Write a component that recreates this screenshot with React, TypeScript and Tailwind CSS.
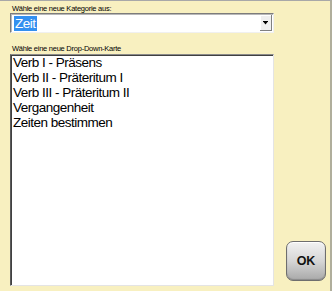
import React from "react";

const items = [
  "Verb I - Präsens",
  "Verb II - Präteritum I",
  "Verb III - Präteritum II",
  "Vergangenheit",
  "Zeiten bestimmen",
];

export default function App() {
  return (
    <div
      className="w-[332px] h-[291px] bg-[#f8f0c0] border-t border-t-[#a8a8a8] border-r-2 border-r-[#b0ae9c] flex flex-col pl-[10px] pt-[3px] overflow-hidden"
      style={{ fontFamily: '"Liberation Sans", Arial, sans-serif' }}
    >
      <div className="h-[9px] leading-[9px] text-[7.5px] tracking-[-0.25px] pl-[2px] text-black">
        Wähle eine neue Kategorie aus:
      </div>
      <div className="w-[264px] h-[20px] bg-white border border-t-[#7c7c7c] border-l-[#7c7c7c] border-b-[#f0f0f0] border-r-[#f0f0f0] shadow-[inset_1px_1px_0_#b8b8b8] flex items-center pl-[3px] pr-[1px]">
        <div className="flex-1 flex items-center">
          <span className="bg-[#3390f0] text-white text-[13.5px] leading-[15px] tracking-[-0.5px] px-[1px]">
            Zeit
          </span>
        </div>
        <div className="w-[12px] h-[16px] bg-[#efefef] border-r border-b border-r-[#808080] border-b-[#808080] shadow-[inset_1px_1px_0_#ffffff] flex items-center justify-center">
          <svg width="5" height="4" viewBox="0 0 5 4">
            <rect x="0" y="0" width="5" height="1" fill="#000" />
            <polygon points="0.5,1 4.5,1 2.5,3.5" fill="#000" />
          </svg>
        </div>
      </div>
      <div className="mt-[11px] h-[10px] leading-[9px] text-[7.5px] tracking-[-0.25px] pl-[2px] text-black">
        Wähle eine neue Drop-Down-Karte
      </div>
      <div className="flex items-end">
        <div className="w-[264px] h-[232px] bg-white border border-t-[#8a8a8a] border-l-[#5a5a5a] border-b-[#e4e4e4] border-r-[#e4e4e4] shadow-[inset_1px_1px_0_#404040] pl-[2px]">
          {items.map((t) => (
            <div
              key={t}
              className="text-[13.5px] leading-[15px] tracking-[-0.5px] text-black whitespace-nowrap"
            >
              {t}
            </div>
          ))}
        </div>
        <div className="ml-[12px] mb-[5px] w-[40px] h-[40px] rounded-[7px] border border-[#6e6e6e] bg-gradient-to-b from-[#f2f2f2] via-[#d6d6d6] to-[#a9a9a9] shadow-[inset_0_1px_0_#ffffff,inset_0_-1px_1px_#8a8a8a] flex items-center justify-center">
          <span className="text-[12.5px] font-bold text-[#111] leading-none">OK</span>
        </div>
      </div>
    </div>
  );
}
